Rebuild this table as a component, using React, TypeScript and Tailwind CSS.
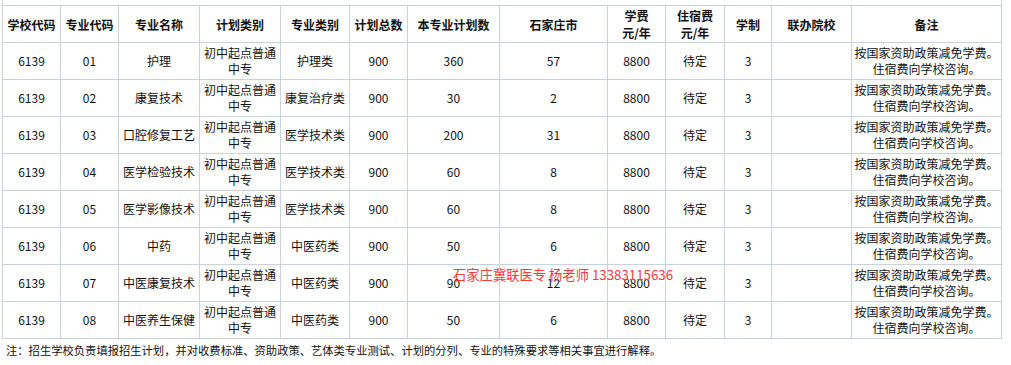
import React from "react";

const rows = [
  ["01", "护理", "护理类", "360", "57"],
  ["02", "康复技术", "康复治疗类", "30", "2"],
  ["03", "口腔修复工艺", "医学技术类", "200", "31"],
  ["04", "医学检验技术", "医学技术类", "60", "8"],
  ["05", "医学影像技术", "医学技术类", "60", "8"],
  ["06", "中药", "中医药类", "50", "6"],
  ["07", "中医康复技术", "中医药类", "90", "12"],
  ["08", "中医养生保健", "中医药类", "50", "6"],
];

function H({ children }: { children: React.ReactNode }) {
  return (
    <div className="bg-white flex items-center justify-center text-center font-bold leading-[17px]">
      <div>{children}</div>
    </div>
  );
}

function C({ children }: { children?: React.ReactNode }) {
  return (
    <div className="bg-white flex items-center justify-center text-center leading-[16px] whitespace-nowrap">
      <div>{children}</div>
    </div>
  );
}

export default function App() {
  return (
    <div className="relative w-[1011px] h-[365px] bg-white text-[12px] text-[#111] font-['Noto_Sans_CJK_SC','Microsoft_YaHei',sans-serif]">
      <div className="ml-[2px] w-[1000px] h-[5px] border-x border-[#c8d3e0]" />
      <div className="ml-[2px] w-[1000px] grid grid-cols-[57px_57px_80px_80px_68px_57px_91px_107px_57px_58px_46px_79px_149px] auto-rows-[36px] gap-px p-px bg-[#c8d3e0]">
        <H>学校代码</H>
        <H>专业代码</H>
        <H>专业名称</H>
        <H>计划类别</H>
        <H>专业类别</H>
        <H>计划总数</H>
        <H>本专业计划数</H>
        <H>石家庄市</H>
        <H>
          学费
          <br />
          元/年
        </H>
        <H>
          住宿费
          <br />
          元/年
        </H>
        <H>学制</H>
        <H>联办院校</H>
        <H>备注</H>
        {rows.map((r) => (
          <React.Fragment key={r[0]}>
            <C>6139</C>
            <C>{r[0]}</C>
            <C>{r[1]}</C>
            <C>
              初中起点普通
              <br />
              中专
            </C>
            <C>{r[2]}</C>
            <C>900</C>
            <C>{r[3]}</C>
            <C>{r[4]}</C>
            <C>8800</C>
            <C>待定</C>
            <C>3</C>
            <C />
            <C>
              按国家资助政策减免学费。
              <br />
              住宿费向学校咨询。
            </C>
          </React.Fragment>
        ))}
      </div>
      <div className="pl-[6px] pt-[3px] text-[11.3px] leading-[16px] whitespace-nowrap">
        注：招生学校负责填报招生计划，并对收费标准、资助政策、艺体类专业测试、计划的分列、专业的特殊要求等相关事宜进行解释。
      </div>
      <div className="absolute left-[453px] top-[266px] text-[13.3px] leading-[18px] text-[#f03c3c] whitespace-nowrap">
        石家庄冀联医专 杨老师 13383115636
      </div>
    </div>
  );
}
